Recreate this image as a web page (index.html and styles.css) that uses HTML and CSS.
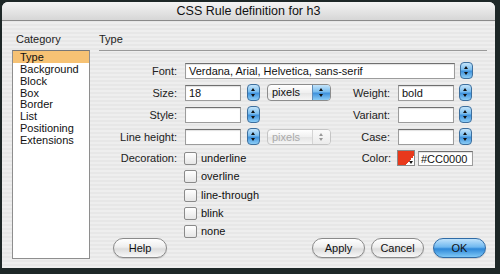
FILE: index.html
```html
<!DOCTYPE html>
<html lang="en">
<head>
    <meta charset="UTF-8">
    <title>CSS Rule definition for h3</title>
    <link rel="stylesheet" href="styles.css">
</head>
<body>

<div class="window">
    <div class="titlebar">CSS Rule definition for h3</div>

    <div class="content">
        <!-- Category list -->
        <div class="sidebar">
            <div class="heading">Category</div>
            <ul class="catList">
                <li class="selected">Type</li>
                <li>Background</li>
                <li>Block</li>
                <li>Box</li>
                <li>Border</li>
                <li>List</li>
                <li>Positioning</li>
                <li>Extensions</li>
            </ul>
        </div>

        <!-- Type panel -->
        <div class="main">
            <div class="heading panelTitle">Type</div>

            <div class="row">
                <span class="label">Font:</span>
                <span class="field wide">Verdana, Arial, Helvetica, sans-serif</span>
                <span class="stepper gapSmall"></span>
            </div>

            <div class="row">
                <span class="label">Size:</span>
                <span class="field">18</span>
                <span class="stepper"></span>
                <span class="popup"><span class="popText">pixels</span><span class="popArrows"></span></span>
                <span class="label right">Weight:</span>
                <span class="field">bold</span>
                <span class="stepper gapSmall"></span>
            </div>

            <div class="row">
                <span class="label">Style:</span>
                <span class="field"></span>
                <span class="stepper"></span>
                <span class="popSpace"></span>
                <span class="label right">Variant:</span>
                <span class="field"></span>
                <span class="stepper gapSmall"></span>
            </div>

            <div class="row">
                <span class="label">Line height:</span>
                <span class="field"></span>
                <span class="stepper"></span>
                <span class="popup disabled"><span class="popText">pixels</span><span class="popArrows"></span></span>
                <span class="label right">Case:</span>
                <span class="field"></span>
                <span class="stepper gapSmall"></span>
            </div>

            <div class="deco">
                <span class="label">Decoration:</span>
                <div class="checks">
                    <div class="check"><span class="box"></span>underline</div>
                    <div class="check"><span class="box"></span>overline</div>
                    <div class="check"><span class="box"></span>line-through</div>
                    <div class="check"><span class="box"></span>blink</div>
                    <div class="check"><span class="box"></span>none</div>
                </div>
                <div class="colorGroup">
                    <span class="colorLabel">Color:</span>
                    <span class="swatch"></span>
                    <span class="field hex">#CC0000</span>
                </div>
            </div>

            <div class="buttons">
                <button class="help">Help</button>
                <button class="apply">Apply</button>
                <button>Cancel</button>
                <button class="ok">OK</button>
            </div>
        </div>
    </div>
</div>

</body>
</html>
```

FILE: styles.css
```css
/* Basic Reset */
* {
    margin: 0;
    padding: 0;
    box-sizing: border-box;
}

body {
    background-color: #1d2727;
    font-family: 'Liberation Sans', Arial, sans-serif;
    font-size: 11px;
    color: #111;
    width: 500px;
    height: 274px;
    overflow: hidden;
}

/* Window frame */
.window {
    width: 493px;
    height: 266px;
    margin: 2px 0 0 2px;
    border-radius: 6px 6px 0 0;
    background: repeating-linear-gradient(to bottom, #eeeeee 0, #eeeeee 2px, #e7e7e7 2px, #e7e7e7 4px);
    display: flex;
    flex-direction: column;
    overflow: hidden;
}

.titlebar {
    height: 19px;
    line-height: 18px;
    text-align: center;
    font-size: 12.5px;
    color: #111;
    background: linear-gradient(to bottom, #f4f4f4, #e2e2e2 60%, #d6d6d6);
    border-bottom: 1px solid #8a8a8a;
}

.content {
    flex: 1;
    display: flex;
    padding: 11px 8px 9px 10px;
}

.heading {
    height: 14px;
    line-height: 14px;
    color: #222;
}

/* Category list */
.sidebar {
    width: 78px;
    display: flex;
    flex-direction: column;
}

.sidebar .heading {
    padding-left: 4px;
    margin-bottom: 4px;
}

.catList {
    flex: 1;
    list-style: none;
    background-color: #fff;
    border: 1px solid #8e8e8e;
    border-top-color: #777;
    padding-top: 0;
}

.catList li {
    height: 11.85px;
    line-height: 12px;
    padding-left: 7px;
    color: #111;
}

.catList li.selected {
    background-color: #f6c274;
}

/* Type panel */
.main {
    flex: 1;
    margin-left: 9px;
    display: flex;
    flex-direction: column;
}

.panelTitle {
    height: 19px;
    border-bottom: 1px solid #9a9a9a;
    margin-bottom: 11px;
}

.row {
    display: flex;
    align-items: center;
    height: 17px;
    margin-bottom: 5px;
}

.row:first-of-type {
    margin-bottom: 4px;
}

.label {
    width: 78px;
    margin-right: 8px;
    text-align: right;
    color: #222;
}

.label.right {
    width: 59px;
}

.field {
    width: 56px;
    height: 16px;
    line-height: 15px;
    padding-left: 3px;
    background-color: #fff;
    border: 1px solid #9c9c9c;
    border-top-color: #6f6f6f;
    box-shadow: inset 0 1px 1px rgba(0, 0, 0, 0.12);
    white-space: nowrap;
    overflow: hidden;
}

.field.wide {
    width: 270px;
}

/* Aqua stepper */
.stepper {
    position: relative;
    width: 13px;
    height: 17px;
    margin: 0 7px 0 6px;
    border: 1px solid #3d6f9e;
    border-radius: 4px;
    background: linear-gradient(to bottom, #c4e4fa 0%, #79bdef 45%, #3f92dc 55%, #8ccdf6 100%);
}

.stepper.gapSmall {
    margin: 0 0 0 5px;
}

.row:first-of-type .stepper.gapSmall {
    margin-left: 4px;
}

.stepper::before,
.stepper::after,
.popArrows::before,
.popArrows::after {
    content: "";
    position: absolute;
    left: 50%;
    margin-left: -2.5px;
    border-left: 2.5px solid transparent;
    border-right: 2.5px solid transparent;
}

.stepper::before,
.popArrows::before {
    top: 3px;
    border-bottom: 3px solid #111;
}

.stepper::after,
.popArrows::after {
    bottom: 3px;
    border-top: 3px solid #111;
}

/* Popup menu */
.popup {
    display: flex;
    width: 64px;
    height: 17px;
    border: 1px solid #8c8c8c;
    border-radius: 4px;
    background: linear-gradient(to bottom, #ffffff, #f0f0f0 50%, #e4e4e4 51%, #f6f6f6);
    overflow: hidden;
}

.popText {
    flex: 1;
    padding-left: 4px;
    line-height: 15px;
}

.popArrows {
    position: relative;
    width: 18px;
    border-left: 1px solid #5f8cb8;
    background: linear-gradient(to bottom, #c4e4fa 0%, #79bdef 45%, #3f92dc 55%, #8ccdf6 100%);
}

.popSpace {
    width: 64px;
}

.popup.disabled {
    border-color: #c4c4c4;
    height: 16px;
}

.popup.disabled .popText {
    color: #aaa;
}

.popup.disabled .popArrows {
    border-left-color: #d4d4d4;
    background: linear-gradient(to bottom, #fafafa, #ececec);
}

.popup.disabled .popArrows::before {
    border-bottom-color: #999;
}

.popup.disabled .popArrows::after {
    border-top-color: #999;
}

/* Decoration checkboxes */
.deco {
    display: flex;
    align-items: flex-start;
    margin-top: 2px;
}

.deco > .label {
    line-height: 13px;
    margin-right: 7px;
}

.checks {
    display: flex;
    flex-direction: column;
    gap: 5.25px;
}

.check {
    display: flex;
    align-items: center;
    height: 13px;
    line-height: 13px;
    color: #111;
}

.box {
    width: 13px;
    height: 13px;
    margin-right: 4px;
    border: 1px solid #8a8a8a;
    border-radius: 2px;
    background: linear-gradient(to bottom, #ffffff, #e6e6e6);
}

/* Color picker */
.colorGroup {
    display: flex;
    align-items: center;
    margin: -2px 14px 0 auto;
}

.colorLabel {
    margin-right: 6px;
    color: #222;
}

.swatch {
    position: relative;
    width: 18px;
    height: 16px;
    margin-right: 3px;
    border: 1px solid #8a8a8a;
    background: linear-gradient(135deg, #e8391c 70%, #ffffff 70%);
}

.swatch::after {
    content: "";
    position: absolute;
    right: 1px;
    bottom: 1px;
    border-left: 2.5px solid transparent;
    border-right: 2.5px solid transparent;
    border-top: 3px solid #111;
}

.field.hex {
    width: 55px;
    height: 15px;
    line-height: 14px;
    padding-left: 2px;
}

/* Buttons */
.buttons {
    display: flex;
    margin-top: auto;
    padding: 0 1px 1px 14px;
}

button {
    width: 53px;
    height: 20px;
    font-family: 'Liberation Sans', Arial, sans-serif;
    font-size: 11px;
    color: #111;
    border: 1px solid #8a8a8a;
    border-radius: 10px;
    background: linear-gradient(to bottom, #ffffff 0%, #eeeeee 45%, #dcdcdc 55%, #f8f8f8 100%);
    box-shadow: 0 1px 1px rgba(0, 0, 0, 0.15);
    margin-left: 6px;
}

button.help {
    width: 54px;
    margin-left: 0;
}

button.apply {
    margin-left: auto;
}

button.ok {
    margin-left: 9px;
    border-color: #2f6ba6;
    background: linear-gradient(to bottom, #bfe2fb 0%, #6fb8f0 45%, #2e88d8 55%, #7fc8f6 100%);
}
```
